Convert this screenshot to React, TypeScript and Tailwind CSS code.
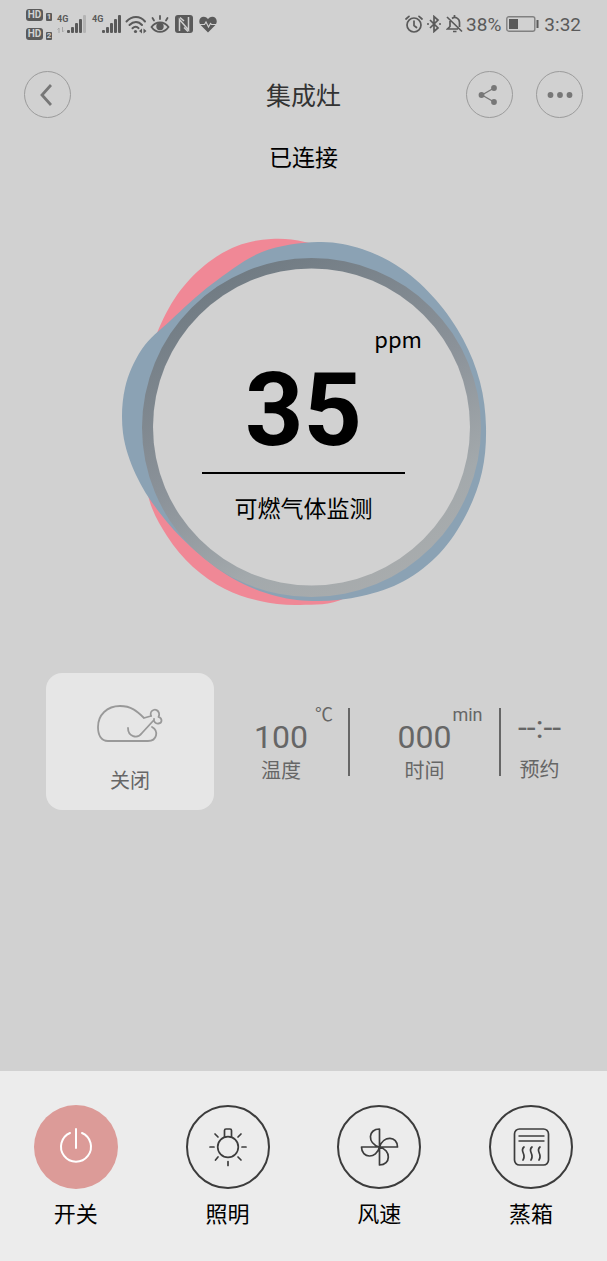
import type { ReactNode } from "react";

type Point = [number, number];

// Closed smooth curve through a list of points
const smoothPath = (points: Point[]) => {
  const n = points.length;
  const at = (i: number) => points[(i + n) % n];

  const curves = points.map((p1, i) => {
    const p0 = at(i - 1);
    const p2 = at(i + 1);
    const p3 = at(i + 2);
    const c1 = [p1[0] + (p2[0] - p0[0]) / 6, p1[1] + (p2[1] - p0[1]) / 6];
    const c2 = [p2[0] - (p3[0] - p1[0]) / 6, p2[1] - (p3[1] - p1[1]) / 6];
    return `C${c1.join(",")} ${c2.join(",")} ${p2.join(",")}`;
  });

  return `M${points[0].join(",")} ${curves.join(" ")}Z`;
};

const pinkWave: Point[] = [
  [157, 333], [177, 295], [205, 265], [237, 246], [271, 239], [305, 242],
  [345, 257], [390, 300], [420, 360], [430, 430], [420, 500], [390, 560],
  [345, 598], [300, 605], [260, 601], [225, 589], [193, 567], [167, 536],
  [149, 499], [143, 450], [143, 400], [148, 365],
];

const blueWave: Point[] = [
  [318, 242], [362, 249], [402, 269], [436, 300], [463, 339], [480, 382],
  [486, 427], [482, 472], [466, 515], [440, 553], [404, 581], [362, 596],
  [318, 601], [276, 596], [232, 578], [191, 547], [159, 512], [136, 475],
  [123, 433], [125, 388], [142, 349], [171, 320], [212, 284], [262, 252],
];

function HdBadge({ sim }: { sim: string }) {
  return (
    <div className="flex items-end gap-[3px] text-[#d1d1d1] font-bold">
      <span className="flex h-3 w-[17px] items-center justify-center rounded-[3px] bg-[#5a5a5a] text-[10px] leading-none">
        HD
      </span>
      <span className="flex h-2 w-[6px] items-center justify-center rounded-[1px] bg-[#5a5a5a] text-[8px] leading-none">
        {sim}
      </span>
    </div>
  );
}

function Signal({ weak }: { weak?: boolean }) {
  return (
    <div className="flex h-[18px] items-end">
      <div className="flex h-full w-[10px] flex-col justify-between">
        <span className="text-[9px] font-bold leading-[9px]">4G</span>
        {weak && (
          <svg viewBox="0 0 8 6" className="h-[6px] w-2" fill="none" stroke="#a5a5a5">
            <path d="M2 6V1M.5 2.500 2 1M5.500 0v5M7 3.500 5.500 5" />
          </svg>
        )}
      </div>
      <svg viewBox="0 0 19 18" className="h-[18px] w-[19px]" fill="#5a5a5a">
        <rect x="0" y="15" width="3" height="3" rx="1" />
        <rect x="4" y="12" width="3" height="6" rx="1" />
        <rect x="8" y="8" width="3" height="10" rx="1" />
        <rect x="12" y="4" width="3" height="14" rx="1" />
        <rect x="16" y="0" width="3" height="18" rx="1" fill={weak ? "#b4b4b4" : "#5a5a5a"} />
      </svg>
    </div>
  );
}

function StatusBar() {
  return (
    <div className="flex h-12 items-center justify-between px-[26px] text-[#5a5a5a]">
      <div className="flex items-center">
        <div className="mr-[5px] flex flex-col gap-[7px]">
          <HdBadge sim="1" />
          <HdBadge sim="2" />
        </div>
        <div className="flex gap-[6px]">
          <Signal weak />
          <Signal />
        </div>
        {/* Wi-Fi */}
        <svg viewBox="0 0 22 19" className="ml-1 h-[19px] w-[22px]" fill="none" stroke="currentColor" strokeWidth="2" strokeLinecap="round">
          <path d="M1.500 6.500C7 .5 15 .5 20 6.500M4.500 10c4-4 9-4 12.500 0M7.500 13.200c2-2 4.500-2 6 0" />
          <circle cx="10.500" cy="16.500" r="1.600" fill="currentColor" stroke="none" />
          <path d="M17 13.500v5l-3-2.500zM18.500 13.500v5l3-2.500z" fill="currentColor" stroke="none" />
        </svg>
        {/* Eye comfort */}
        <svg viewBox="0 0 20 19" className="ml-[3px] h-[19px] w-5" fill="none" stroke="currentColor" strokeWidth="1.800" strokeLinecap="round">
          <path d="M1.500 12c4.500-6 12.500-6 17 0-4.500 6.500-12.500 6.500-17 0zM10 4V1M4 5.500 2.500 3M16 5.500 17.500 3" />
          <circle cx="10" cy="11.500" r="2.800" fill="currentColor" />
        </svg>
        {/* NFC */}
        <svg viewBox="0 0 18 19" className="ml-[5px] h-[19px] w-[18px]" fill="none" stroke="#d1d1d1">
          <rect x="0" y="0" width="18" height="18" rx="3" fill="currentColor" stroke="none" />
          <path d="M4.500 16V4.500L13.500 15V2" strokeWidth="1.500" />
          <path d="M5 2.500 9 6M9 12.500l4 4" strokeWidth="1.500" />
        </svg>
        {/* Heart rate */}
        <svg viewBox="0 0 18 17" className="ml-[6px] h-[17px] w-[18px]">
          <path d="M9 16.500 1.800 9.300C-1.500 5 1 .8 4.700.8 6.800.8 8.200 1.800 9 3.200 9.800 1.800 11.200.8 13.300.8 17 .8 19.500 5 16.200 9.300z" fill="currentColor" />
          <path d="M0 8.500h5.500l1.500-2.500 2.500 5 2-3.500 1 1H18" fill="none" stroke="#d1d1d1" strokeWidth="1.100" />
        </svg>
      </div>

      <div className="flex items-center text-[19px] leading-none">
        {/* Alarm */}
        <svg viewBox="0 0 18 18" className="h-[18px] w-[18px]" fill="none" stroke="currentColor" strokeWidth="1.700" strokeLinecap="round">
          <circle cx="9" cy="10" r="7" />
          <path d="M9 6v4.500l2.500 2M1 4l3-2.700M17 4l-3-2.700" />
        </svg>
        {/* Bluetooth */}
        <svg viewBox="0 0 14 18" className="ml-1 h-[18px] w-[14px]" fill="none" stroke="currentColor" strokeWidth="1.700">
          <path d="m3 5 8 8-4 3.500v-15L11 5l-8 8" />
          <path d="M0 9h2M12 9h2" />
        </svg>
        {/* Muted bell */}
        <svg viewBox="0 0 17 18" className="ml-[5px] h-[18px] w-[17px]" fill="none" stroke="currentColor" strokeWidth="1.700">
          <path d="M1 2l15 14.500M4 6v5.500L1.500 14H12M6 3.500c3.500-2.500 7.500.2 7.500 4V12M8.500 0v2.500M7 16.500h3.500" />
        </svg>
        <span className="ml-[3px]">38%</span>
        <svg viewBox="0 0 33 16" className="ml-[5px] h-4 w-[33px]">
          <rect x=".8" y=".8" width="28" height="14.400" rx="2" fill="none" stroke="#808080" strokeWidth="1.400" />
          <rect x="3" y="3" width="9" height="10" fill="currentColor" />
          <rect x="30.500" y="4" width="2" height="8" fill="currentColor" />
        </svg>
        <span className="ml-[5px]">3:32</span>
      </div>
    </div>
  );
}

function RoundButton({ label, children }: { label: string; children: ReactNode }) {
  return (
    <button
      aria-label={label}
      className="flex h-[47px] w-[47px] items-center justify-center rounded-full border border-[#9b9b9b] text-[#777777]"
    >
      {children}
    </button>
  );
}

function Header() {
  return (
    <header className="mt-[23px] grid grid-cols-[1fr_auto_1fr] items-center px-6">
      <RoundButton label="返回">
        <svg viewBox="0 0 12 22" className="mr-1 h-[22px] w-3" fill="none" stroke="currentColor" strokeWidth="2.800">
          <path d="M11 1 2 11l9 10" />
        </svg>
      </RoundButton>
      <h1 className="pt-1 text-[25px] leading-8 text-[#333333]">集成灶</h1>
      <div className="flex justify-end gap-[23px]">
        <RoundButton label="分享">
          <svg viewBox="0 0 20 20" className="mr-1 h-5 w-5" fill="currentColor">
            <path d="M16 3 4 10l12 7" fill="none" stroke="currentColor" strokeWidth="1.300" />
            <circle cx="16" cy="3" r="2.900" />
            <circle cx="3.500" cy="10" r="2.900" />
            <circle cx="16" cy="17" r="2.900" />
          </svg>
        </RoundButton>
        <RoundButton label="更多">
          <svg viewBox="0 0 26 6" className="h-[6px] w-[26px]" fill="currentColor">
            <circle cx="3.500" cy="3" r="2.900" />
            <circle cx="13" cy="3" r="2.900" />
            <circle cx="22.500" cy="3" r="2.900" />
          </svg>
        </RoundButton>
      </div>
    </header>
  );
}

function GasGauge() {
  return (
    <section className="mx-auto mt-[62px] grid">
      <svg viewBox="121 237 366 370" className="col-start-1 row-start-1 h-[370px] w-[366px]">
        <defs>
          <linearGradient id="ring" x1="0.2" y1="0" x2="0.7" y2="1">
            <stop offset="0%" stopColor="#6d7880" />
            <stop offset="50%" stopColor="#8b9299" />
            <stop offset="80%" stopColor="#a3a9ac" />
            <stop offset="100%" stopColor="#a9acad" />
          </linearGradient>
        </defs>
        <path d={smoothPath(pinkWave)} fill="#f08896" />
        <path d={smoothPath(blueWave)} fill="#8ba2b4" />
        <circle cx="311.500" cy="427.500" r="169.500" fill="url(#ring)" />
        <circle cx="311.500" cy="427" r="158.500" fill="#d1d1d1" />
      </svg>
      <div className="col-start-1 row-start-1 mx-auto flex w-[203px] flex-col items-center pt-[85px] text-black">
        <span className="-mr-[17px] self-end font-['Noto_Sans_CJK_SC',sans-serif] text-[22px] leading-8">
          ppm
        </span>
        <span className="pt-[5px] text-[102px] font-bold leading-[102px]">35</span>
        <div className="mt-[11px] h-[2px] w-full bg-black" />
        <span className="mt-5 whitespace-nowrap text-[23px] leading-8">可燃气体监测</span>
      </div>
    </section>
  );
}

function Stat({ value, unit, label }: { value: string; unit?: string; label: string }) {
  return (
    <div className={`flex flex-col items-center ${unit ? "pt-12" : "pt-[38px]"}`}>
      <div className="relative text-[32px] leading-8">
        {value}
        {unit && (
          <span className="absolute -top-5 left-full w-8 text-center text-[18px] leading-7">
            {unit}
          </span>
        )}
      </div>
      <span className={`text-[20px] leading-7 ${unit ? "mt-1" : "mt-[13px]"}`}>{label}</span>
    </div>
  );
}

function OvenPanel() {
  return (
    <section className="mb-8 ml-[46px] mr-[29px] mt-[66px] grid grid-cols-[168fr_134fr_2px_149fr_2px_77fr] text-[#666666]">
      <button className="flex h-[137px] flex-col items-center rounded-2xl bg-[#e6e6e6] pt-8">
        <svg viewBox="0 0 66 38" className="h-[38px] w-[66px]" fill="none" stroke="#999999" strokeWidth="1.800" strokeLinecap="round" strokeLinejoin="round">
          <path d="M55 22c7 4 5 14-4 14H11C4 36 1 30 1 22 1 10 10 1 23 1c11 0 17 5 24 12l7-2" />
          <path d="M54 11c-2-6 6-9 8-3 .5 1.500 0 3-.5 4 4 1 4 6 0 6.500-3 .5-5-2-4.500-4.500M56 16 45 28c-5 7-14 3-14-5" />
        </svg>
        <span className="mt-6 text-[20px] leading-7">关闭</span>
      </button>
      <Stat value="100" unit="℃" label="温度" />
      <div className="mt-[35px] h-[68px] bg-[#666666]" />
      <Stat value="000" unit="min" label="时间" />
      <div className="mt-[35px] h-[68px] bg-[#666666]" />
      <Stat value="--:--" label="预约" />
    </section>
  );
}

const controls = [
  {
    label: "开关",
    active: true,
    icon: <path d="M14 6a15 15 0 1 0 12 0M20 2v19" strokeWidth="2" />,
  },
  {
    label: "照明",
    icon: (
      <>
        <circle cx="20" cy="20" r="10.300" />
        <path d="M16.500 10V3.500q0-1.500 1.500-1.500h4q1.500 0 1.500 1.500V10" />
        <path d="M2 20h4M34 20h4M20 34.500v4M7 7l3 3M33 7l-3 3M7.500 33l2.500-3M33 33l-3-3" />
      </>
    ),
  },
  {
    label: "风速",
    icon: (
      <path d="M20.500 20V2C9 2 8 16 20 20M20.500 20H38.500C38.500 9 24.500 8 20.500 20M20.500 20v18c11.500 0 12-15 0-18M20.500 20h-18c0 11.500 15 12.500 18 0" />
    ),
  },
  {
    label: "蒸箱",
    icon: (
      <>
        <rect x="3.500" y="2" width="34" height="36" rx="5" />
        <path d="M8 9h25M8 14h25" strokeWidth="1.400" />
        <path d="M13 20c-5 4 3 7-1 13M21 20c-5 4 3 7-1 13M29 20c-5 4 3 7-1 13" />
      </>
    ),
  },
];

function BottomControls() {
  return (
    <footer className="mt-auto grid h-[190px] grid-cols-4 bg-[#ececec] pt-[34px]">
      {controls.map((item) => (
        <button key={item.label} className="flex flex-col items-center text-black">
          <span
            className={`flex h-[84px] w-[84px] items-center justify-center rounded-full ${
              item.active ? "bg-[#dc9b98] text-white" : "border-2 border-[#3c3c3c] text-[#3c3c3c]"
            }`}
          >
            <svg
              viewBox="0 0 40 40"
              className="h-10 w-10"
              fill="none"
              stroke="currentColor"
              strokeWidth="1.700"
              strokeLinecap="round"
              strokeLinejoin="round"
            >
              {item.icon}
            </svg>
          </span>
          <span className="mt-[10px] text-[22px] leading-8">{item.label}</span>
        </button>
      ))}
    </footer>
  );
}

export default function App() {
  return (
    <div className="flex min-h-screen flex-col bg-[#d1d1d1] font-['Roboto','Noto_Sans_CJK_SC',sans-serif]">
      <StatusBar />
      <Header />
      <p className="mt-[25px] text-center text-[23px] leading-8 text-black">已连接</p>
      <GasGauge />
      <OvenPanel />
      <BottomControls />
    </div>
  );
}
